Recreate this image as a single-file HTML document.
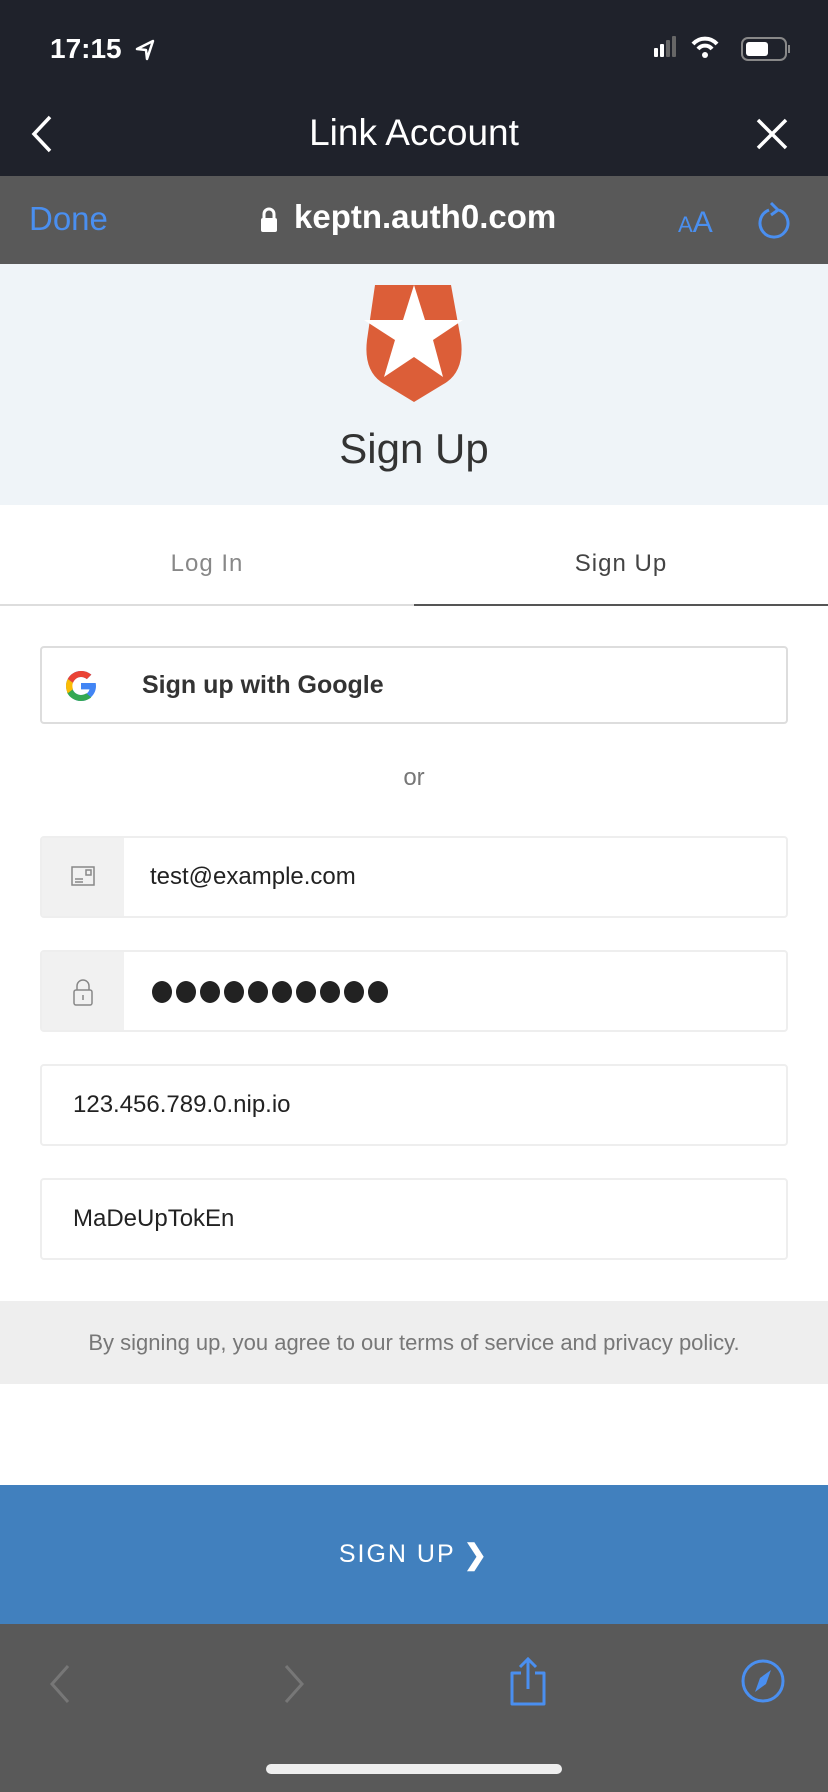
<!DOCTYPE html>
<html><head><meta charset="utf-8"><style>
*{margin:0;padding:0;box-sizing:border-box}
body{width:828px;height:1792px;position:relative;overflow:hidden;font-family:"Liberation Sans",sans-serif;background:#fff}
.a{position:absolute}
.field{position:absolute;left:40px;width:748px;border:2px solid #eee;border-radius:4px;background:#fff}
.ic{position:absolute;left:0;top:0;bottom:0;width:82px;background:#f1f1f1}
.ft{position:absolute;top:0;bottom:0;display:flex;align-items:center;font-size:24px;color:#222}
</style></head><body>
<div class="a" style="left:0;top:0;width:828px;height:176px;background:#1f222b"></div>
<div class="a" style="left:50px;top:33px;color:#fff;font-size:28px;font-weight:bold">17:15</div>
<svg class="a" style="left:134px;top:38px" width="22" height="24" viewBox="0 0 22 24"><path d="M3 11 L19 3 L13 21 L12 12 Z" fill="none" stroke="#fff" stroke-width="2.5" stroke-linejoin="round"/></svg>
<svg class="a" style="left:650px;top:34px" width="140" height="30" viewBox="0 0 140 30">
<rect x="4" y="14" width="4" height="9" rx="1" fill="#fff"/><rect x="10" y="10" width="4" height="13" rx="1" fill="#fff"/><rect x="16" y="6" width="4" height="17" rx="1" fill="#666"/><rect x="22" y="2" width="4" height="21" rx="1" fill="#666"/>
<path d="M43 10 A16 16 0 0 1 67 10" fill="none" stroke="#fff" stroke-width="4"/><path d="M48 15 A9 9 0 0 1 62 15" fill="none" stroke="#fff" stroke-width="4"/><circle cx="55" cy="21" r="3" fill="#fff"/>
<rect x="92" y="4" width="44" height="22" rx="6" fill="none" stroke="#888" stroke-width="2"/><rect x="96" y="8" width="22" height="14" rx="3" fill="#fff"/><rect x="138" y="11" width="2" height="8" fill="#888"/>
</svg>
<svg class="a" style="left:28px;top:114px" width="26" height="40" viewBox="0 0 26 40"><path d="M22 3 L6 20 L22 37" fill="none" stroke="#fff" stroke-width="3.5"/></svg>
<div class="a" style="left:0;width:828px;top:112px;text-align:center;color:#fff;font-size:37px">Link Account</div>
<svg class="a" style="left:756px;top:118px" width="32" height="32" viewBox="0 0 32 32"><path d="M2 2 L30 30 M30 2 L2 30" stroke="#fff" stroke-width="3.5"/></svg>

<div class="a" style="left:0;top:176px;width:828px;height:88px;background:#595959"></div>
<div class="a" style="left:29px;top:200px;color:#4a8ff0;font-size:33px">Done</div>
<svg class="a" style="left:259px;top:206px" width="20" height="28" viewBox="0 0 20 28"><path d="M5 12 V8 A5 5 0 0 1 15 8 V12" fill="none" stroke="#fff" stroke-width="3"/><rect x="2" y="12" width="16" height="14" rx="2" fill="#fff"/></svg>
<div class="a" style="left:294px;top:198px;color:#fff;font-size:33px;font-weight:bold">keptn.auth0.com</div>
<div class="a" style="left:678px;top:206px;color:#4a8ff0;font-size:30px"><span style="font-size:22px">A</span>A</div>
<svg class="a" style="left:757px;top:200px" width="36" height="42" viewBox="0 0 36 42"><path d="M12 10 A14 14 0 1 0 22 10" fill="none" stroke="#4a8ff0" stroke-width="3"/><path d="M14 3 L21 10 L14 15" fill="none" stroke="#4a8ff0" stroke-width="3"/></svg>

<div class="a" style="left:0;top:264px;width:828px;height:241px;background:#eff4f8"></div>
<svg class="a" style="left:362px;top:285px" width="104" height="118" viewBox="0 0 104 118">
<path d="M13 0 H89 L99 55 Q103 88 80 100 L52 117 L24 100 Q1 88 5 55 Z" fill="#dc5e38"/>
<path d="M52 0 L63 35 L101 35 L71 55 L81 92 L52 72 L22 92 L33 55 L2 35 L41 35 Z" fill="#fff"/>
</svg>
<div class="a" style="left:0;width:828px;top:425px;text-align:center;color:#333;font-size:42px">Sign Up</div>

<div class="a" style="left:0;top:550px;width:414px;text-align:center;color:#888;font-size:24px;letter-spacing:1px">Log In</div>
<div class="a" style="left:414px;top:550px;width:414px;text-align:center;color:#444;font-size:24px;letter-spacing:1px">Sign Up</div>
<div class="a" style="left:0;top:604px;width:414px;height:2px;background:#ddd"></div>
<div class="a" style="left:414px;top:604px;width:414px;height:2px;background:#555"></div>

<div class="field" style="top:646px;height:78px;border-color:#ddd">
<svg class="a" style="left:21px;top:20px" width="36" height="36" viewBox="0 0 48 48"><path d="M43.6 20H24v8.5h11.3C34.2 33.4 29.6 36 24 36c-6.6 0-12-5.4-12-12s5.4-12 12-12c3 0 5.7 1.1 7.8 2.9l6-6C34 5.7 29.3 4 24 4 13 4 4 13 4 24s9 20 20 20 20-9 20-20c0-1.3-.2-2.7-.4-4z" fill="#4285f4"/><path d="M6.3 14.7l7 5.1C15.2 15.1 19.3 12 24 12c3 0 5.7 1.1 7.8 2.9l6-6C34 5.7 29.3 4 24 4 16.3 4 9.7 8.3 6.3 14.7z" fill="#ea4335"/><path d="M24 44c5.2 0 9.9-1.7 13.6-4.8l-6.5-5.5C29.1 35.2 26.6 36 24 36c-5.6 0-10.3-3.700-11.7-8.8l-7 5.4C8.7 39.3 15.8 44 24 44z" fill="#34a853"/><path d="M6.3 14.7l7 5.1c-.6 1.3-.8 2.7-.8 4.2s.3 2.9.8 4.2l-7 5.4C4.8 30.7 4 27.4 4 24s.8-6.7 2.3-9.3z" fill="#fbbc05"/></svg>
<div class="ft" style="left:100px;font-weight:bold;font-size:25px;color:#333">Sign up with Google</div>
</div>
<div class="a" style="left:0;width:828px;top:764px;text-align:center;color:#777;font-size:24px">or</div>

<div class="field" style="top:836px;height:82px"><div class="ic"><svg class="a" style="left:29px;top:28px" width="24" height="22" viewBox="0 0 24 22"><rect x="1" y="1" width="22" height="18" fill="none" stroke="#888" stroke-width="1.5"/><rect x="15" y="4" width="5" height="5" fill="none" stroke="#888" stroke-width="1.5"/><path d="M4 13h8M4 16h8" stroke="#888" stroke-width="1.5"/></svg></div><div class="ft" style="left:108px">test@example.com</div></div>
<div class="field" style="top:950px;height:82px"><div class="ic"><svg class="a" style="left:31px;top:26px" width="20" height="30" viewBox="0 0 20 30"><path d="M4 12V8a6 6 0 0 1 12 0v4" fill="none" stroke="#888" stroke-width="1.5"/><rect x="1" y="12" width="18" height="15" rx="2" fill="none" stroke="#888" stroke-width="1.5"/><path d="M10 17v5" stroke="#888" stroke-width="1.5"/></svg></div>
<svg class="a" style="left:110px;top:28px" width="240" height="24" viewBox="0 0 240 24"><g fill="#222">
<ellipse cx="10" cy="12" rx="10" ry="11"/><ellipse cx="34" cy="12" rx="10" ry="11"/><ellipse cx="58" cy="12" rx="10" ry="11"/><ellipse cx="82" cy="12" rx="10" ry="11"/><ellipse cx="106" cy="12" rx="10" ry="11"/><ellipse cx="130" cy="12" rx="10" ry="11"/><ellipse cx="154" cy="12" rx="10" ry="11"/><ellipse cx="178" cy="12" rx="10" ry="11"/><ellipse cx="202" cy="12" rx="10" ry="11"/><ellipse cx="226" cy="12" rx="10" ry="11"/></g></svg></div>
<div class="field" style="top:1064px;height:82px"><div class="ft" style="left:31px">123.456.789.0.nip.io</div></div>
<div class="field" style="top:1178px;height:82px"><div class="ft" style="left:31px">MaDeUpTokEn</div></div>

<div class="a" style="left:0;top:1301px;width:828px;height:83px;background:#eee;display:flex;align-items:center;justify-content:center;color:#777;font-size:22px">By signing up, you agree to our terms of service and privacy policy.</div>

<div class="a" style="left:0;top:1485px;width:828px;height:139px;background:#4180be;display:flex;align-items:center;justify-content:center;color:#fff;font-size:25px;letter-spacing:2px">SIGN UP <b style="margin-left:8px;font-size:28px">&#x276F;</b></div>

<div class="a" style="left:0;top:1624px;width:828px;height:168px;background:#595959"></div>
<svg class="a" style="left:48px;top:1664px" width="24" height="40" viewBox="0 0 24 40"><path d="M20 2 L4 20 L20 38" fill="none" stroke="#777" stroke-width="3"/></svg>
<svg class="a" style="left:282px;top:1664px" width="24" height="40" viewBox="0 0 24 40"><path d="M4 2 L20 20 L4 38" fill="none" stroke="#777" stroke-width="3"/></svg>
<svg class="a" style="left:508px;top:1656px" width="40" height="50" viewBox="0 0 40 50"><path d="M13 17H4v31h32V17h-9" fill="none" stroke="#4a8ff0" stroke-width="3" stroke-linejoin="round"/><path d="M20 33V3M12 11l8-8 8 8" fill="none" stroke="#4a8ff0" stroke-width="3"/></svg>
<svg class="a" style="left:740px;top:1658px" width="46" height="46" viewBox="0 0 46 46"><circle cx="23" cy="23" r="20" fill="none" stroke="#4a8ff0" stroke-width="3"/><path d="M31 12 L26 26 L15 34 L20 20 Z" fill="#4a8ff0"/></svg>
<div class="a" style="left:266px;top:1764px;width:296px;height:10px;border-radius:5px;background:#eee"></div>
</body></html>
